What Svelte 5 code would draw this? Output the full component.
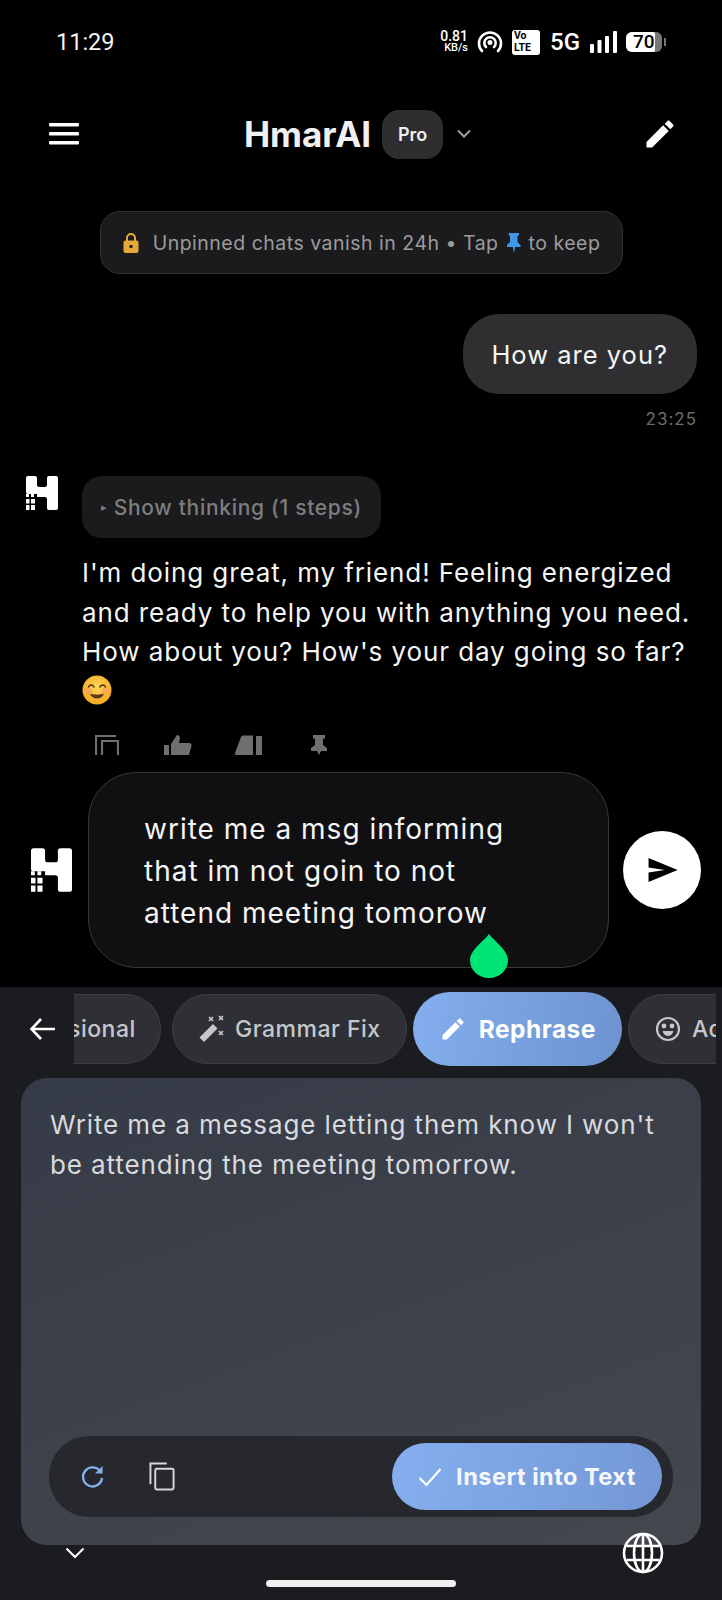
<script>
  const answer = [
    "I'm doing great, my friend! Feeling energized",
    "and ready to help you with anything you need.",
    "How about you? How's your day going so far?",
  ];
</script>

{#snippet logo(w, h)}
  <svg class="logo" width={w} height={h} viewBox="0 0 32 34">
    <path fill="#fff" d="M2 0h7a2 2 0 0 1 2 2v7a2 2 0 0 0 2 2h6a2 2 0 0 0 2-2V2a2 2 0 0 1 2-2h7a2 2 0 0 1 2 2v30a2 2 0 0 1-2 2h-7a2 2 0 0 1-2-2v-9a2 2 0 0 0-2-2H11v-3H2a2 2 0 0 1-2-2V2a2 2 0 0 1 2-2z" />
    <path fill="#fff" d="M0 18h3v3H0zM5 18h3v3H5zM0 23h3.500v4.500H0zM5 23h4v4.500H5zM0 29h3.500v5H0zM5 29h4v5H5z" />
  </svg>
{/snippet}

<div class="phone">
  <div class="upper">
    <div class="status">
      <span class="clock">11:29</span>
      <div class="status-right">
        <div class="speed"><span>0.81</span><span class="unit">KB/s</span></div>
        <svg width="26" height="26" viewBox="0 0 26 24" fill="none" stroke="#fff" stroke-width="2.600" stroke-linecap="round">
          <path d="M5 21a11 11 0 1 1 16 0" />
          <path d="M9 17a5.700 5.700 0 1 1 8 0" />
          <circle cx="13" cy="12.500" r="1.200" />
        </svg>
        <div class="volte"><span>Vo</span><span>LTE</span></div>
        <span class="net">5G</span>
        <svg width="27" height="22" viewBox="0 0 27 22" fill="#fff">
          <rect x="0" y="13" width="4" height="9" rx="1" />
          <rect x="7.500" y="9" width="4" height="13" rx="1" />
          <rect x="15" y="5" width="4" height="17" rx="1" />
          <rect x="23" y="0" width="4" height="22" rx="1" />
        </svg>
        <div class="battery"><div class="battery-fill">70</div></div>
      </div>
    </div>

    <header class="top">
      <svg class="menu" width="30" height="22" viewBox="0 0 30 22" fill="#fff">
        <rect y="0" width="30" height="3.500" rx="1" />
        <rect y="9" width="30" height="3.500" rx="1" />
        <rect y="18" width="30" height="3.500" rx="1" />
      </svg>
      <div class="brand">
        <span class="brand-name">HmarAI</span>
        <span class="pro">Pro</span>
        <svg width="16" height="10" viewBox="0 0 16 10" fill="none" stroke="#a0a0a0" stroke-width="2"><path d="M2 1.500l6 6 6-6" /></svg>
      </div>
      <svg class="pencil" width="36" height="36" viewBox="0 0 24 24" fill="#fff">
        <path d="M3 17.250V21h3.750L17.810 9.940l-3.750-3.750L3 17.250zM20.710 7.040c.39-.39.39-1.020 0-1.410l-2.340-2.340c-.39-.39-1.020-.39-1.410 0l-1.830 1.830 3.750 3.750 1.830-1.830z" />
      </svg>
    </header>

    <div class="notice-wrap">
      <div class="notice">
        <svg class="lock" width="18" height="22" viewBox="0 0 18 22">
          <path fill="none" stroke="#e5a93b" stroke-width="2" d="M5 9V6a4 4 0 0 1 8 0v3" />
          <rect x="1.500" y="8.500" width="15" height="12.500" rx="2" fill="#e5a93b" />
          <circle cx="9" cy="14.500" r="1.700" fill="#1b1b1d" />
        </svg>
        <span>Unpinned chats vanish in 24h • Tap</span>
        <svg width="16" height="22" viewBox="0 0 16 22" fill="#3f97e8"><path d="M3 1h10v2l-1.500 1v6l3 3v2H9.200L8 21l-1.200-6H1v-2l3-3V4L2.500 3z" /></svg>
        <span>to keep</span>
      </div>
    </div>

    <div class="chat">
      <div class="user-row">
        <div class="user-bubble">How are you?</div>
        <div class="stamp">23:25</div>
      </div>
      <div class="ai-row">
        {@render logo(32, 34)}
        <div class="ai-body">
          <div class="thinking"><span class="caret">▸</span> Show thinking (1 steps)</div>
          <div class="answer">
            {#each answer as line}
              <div>{line}</div>
            {/each}
            <svg class="emoji" width="30" height="30" viewBox="0 0 30 30">
              <defs>
                <radialGradient id="face" cx="50%" cy="40%" r="60%">
                  <stop offset="0%" stop-color="#fdd65a" />
                  <stop offset="100%" stop-color="#f3a81e" />
                </radialGradient>
              </defs>
              <circle cx="15" cy="15" r="14.500" fill="url(#face)" />
              <circle cx="6.500" cy="16" r="3.500" fill="#f79a6a" opacity="0.6" />
              <circle cx="23.500" cy="16" r="3.500" fill="#f79a6a" opacity="0.6" />
              <path d="M6.500 12c1-2.500 4.500-2.500 5.500 0M18 12c1-2.500 4.500-2.500 5.500 0" fill="none" stroke="#5b3a12" stroke-width="1.600" stroke-linecap="round" />
              <path d="M8 18.500c3 1.500 11 1.500 14 0-1 3.500-3.500 5-7 5s-6-1.500-7-5z" fill="#5b3a12" />
            </svg>
          </div>
          <div class="tools">
            <svg width="24" height="20" viewBox="0 0 24 20" fill="none" stroke="#6f6f6f" stroke-width="2.200"><path d="M1 20V1h20M7 20V6h16v14" /></svg>
            <svg width="28" height="20" viewBox="0 0 28 20" fill="#6f6f6f"><path d="M0 10h5v10H0zM7 9l6-9c2 0 3 1.500 3 3l-1 5h10c2 0 3 1.500 2.500 3L25 20H7z" /></svg>
            <svg class="flag" width="28" height="20" viewBox="0 0 28 20" fill="#6f6f6f"><path d="M6 2c.4-1 1.200-1.500 2-1.500h10V20H1c-1 0-1.300-.8-1-2zM21 1h6v19h-6z" /></svg>
            <svg width="18" height="20" viewBox="0 0 18 20" fill="#6f6f6f"><path d="M3 0h12v3l-2 1v6l4 3v3h-6l-2 4-2-4H1v-3l4-3V4L3 3z" /></svg>
          </div>
        </div>
      </div>
    </div>

    <div class="composer">
      {@render logo(41, 46)}
      <div class="input">
        <div>write me a msg informing</div>
        <div>that im not goin to not</div>
        <div>attend meeting tomorow</div>
        <svg class="drop" width="38" height="44" viewBox="0 0 38 44">
          <path fill="#00e676" d="M19 0C24 7 38 16 38 26c0 10-8 18-19 18S0 36 0 26C0 16 14 7 19 0z" />
        </svg>
      </div>
      <div class="send">
        <svg width="34" height="34" viewBox="0 0 24 24" fill="#000"><path d="M2.500 3.500L23 12 2.500 20.500v-6.700L14 12 2.500 10.200z" /></svg>
      </div>
    </div>
  </div>

  <div class="keyboard">
    <div class="modes">
      <svg class="back" width="26" height="24" viewBox="0 0 26 24" fill="none" stroke="#fff" stroke-width="2.600"><path d="M12 2L2.500 12l9.500 10M3 12h23" /></svg>
      <div class="chip-track">
        <div class="chip cut-left"><span>sional</span></div>
        <div class="chip grammar">
          <svg width="30" height="30" viewBox="0 0 30 30">
            <path fill="#c6c7cb" d="M17 10l4.500 4.500L8 28l-4.500-4.500z" />
            <path stroke="#c6c7cb" stroke-width="1.700" d="M13 3l4 4M17 3l-4 4M23 2l4 4M27 2l-4 4M23 17l4 4M27 17l-4 4" />
          </svg>
          Grammar Fix
        </div>
        <div class="chip active">
          <svg width="28" height="28" viewBox="0 0 24 24" fill="#fff"><path d="M3 17.250V21h3.750L17.810 9.940l-3.750-3.750L3 17.250zM20.710 7.040c.39-.39.39-1.020 0-1.410l-2.340-2.340c-.39-.39-1.020-.39-1.410 0l-1.830 1.830 3.750 3.750 1.830-1.830z" /></svg>
          Rephrase
        </div>
        <div class="chip cut-right">
          <svg width="28" height="28" viewBox="0 0 28 28" fill="none" stroke="#c6c7cb" stroke-width="2.200">
            <circle cx="14" cy="14" r="11" />
            <circle cx="10" cy="11" r="1.300" fill="#c6c7cb" />
            <circle cx="18" cy="11" r="1.300" fill="#c6c7cb" />
            <path d="M8.500 16h11c-1 3.500-3 5-5.500 5s-4.500-1.500-5.500-5z" fill="#c6c7cb" stroke="none" />
          </svg>
          Adjust
        </div>
      </div>
    </div>

    <div class="panel">
      <p class="result">Write me a message letting them know I won't be attending the meeting tomorrow.</p>
      <div class="actions">
        <svg class="refresh" width="28" height="28" viewBox="0 0 28 28" fill="none" stroke="#86b0ee" stroke-width="2.400">
          <path d="M21 8a9.500 9.500 0 1 0 2 7" />
          <path d="M23.500 3v7.500H16z" fill="#86b0ee" stroke="none" />
        </svg>
        <svg class="copy" width="27" height="31" viewBox="0 0 28 30" fill="none" stroke="#d8d8da" stroke-width="2">
          <path d="M1.500 23V1.500h17" />
          <rect x="6.500" y="7" width="19" height="21.500" rx="1.500" />
        </svg>
        <div class="insert">
          <svg width="24" height="20" viewBox="0 0 24 20" fill="none" stroke="#fff" stroke-width="2.200"><path d="M1.500 11l7 7L22.500 2" /></svg>
          Insert into Text
        </div>
      </div>
    </div>

    <div class="kb-bottom">
      <svg width="20" height="12" viewBox="0 0 20 12" fill="none" stroke="#fff" stroke-width="2"><path d="M1.500 1.500L10 10l8.500-8.500" /></svg>
      <svg class="globe" width="42" height="42" viewBox="0 0 42 42" fill="none" stroke="#fff" stroke-width="2.600">
        <circle cx="21" cy="21" r="19" />
        <ellipse cx="21" cy="21" rx="9" ry="19" />
        <path d="M21 2v38M4.500 14h33M4.500 28h33" />
      </svg>
    </div>
    <div class="home-bar"></div>
  </div>
</div>

<style>
  :global(body) {
    background: #000;
  }

  .phone {
    width: 722px;
    height: 1600px;
    display: flex;
    flex-direction: column;
    overflow: hidden;
    background: #000;
    color: #fff;
    font-family: Inter, "Liberation Sans", sans-serif;
  }

  .upper {
    height: 987px;
    flex: none;
    display: flex;
    flex-direction: column;
    overflow: hidden;
  }

  .status {
    height: 84px;
    padding: 0 56px;
    display: flex;
    justify-content: space-between;
    align-items: center;
    flex: none;
  }

  .clock {
    font: 400 23.500px Roboto, sans-serif;
    color: #f2f2f2;
  }

  .status-right {
    display: flex;
    align-items: center;
    gap: 9px;
    margin-right: 4px;
  }

  .speed {
    display: flex;
    flex-direction: column;
    align-items: flex-end;
    font: 500 14px/12px Roboto, sans-serif;
  }

  .speed .unit {
    font-size: 11px;
  }

  .volte {
    width: 28px;
    height: 25px;
    border-radius: 3px;
    background: #fff;
    color: #000;
    display: flex;
    flex-direction: column;
    padding-left: 2px;
    box-sizing: border-box;
    font: 700 10.500px/12px Roboto, sans-serif;
  }

  .net {
    font: 500 24px Roboto, sans-serif;
    margin: 0 1px;
  }

  .battery {
    width: 36px;
    height: 20px;
    border-radius: 6px;
    background: #777;
    position: relative;
  }

  .battery::after {
    content: "";
    position: absolute;
    right: -4px;
    top: 6px;
    width: 2px;
    height: 8px;
    background: #777;
  }

  .battery-fill {
    width: 29px;
    height: 20px;
    padding-left: 7px;
    box-sizing: border-box;
    background: #fff;
    color: #000;
    border-radius: 6px 2px 2px 6px;
    font: 500 19px/20px Roboto, sans-serif;
  }

  .top {
    height: 100px;
    flex: none;
    padding: 0 44px 0 49px;
    display: flex;
    align-items: center;
    justify-content: space-between;
  }

  .brand {
    display: flex;
    align-items: center;
    margin-left: -5px;
  }

  .brand-name {
    font-size: 35px;
    font-weight: 700;
    color: #f0f0f0;
  }

  .pro {
    width: 61px;
    height: 49px;
    margin: 0 13px 0 11px;
    background: #2e2e30;
    border-radius: 17px;
    display: flex;
    align-items: center;
    justify-content: center;
    font-size: 18px;
    font-weight: 600;
    color: #f0f0f0;
  }

  .notice-wrap {
    display: flex;
    justify-content: center;
    margin-top: 27px;
    flex: none;
  }

  .notice {
    width: 523px;
    height: 63px;
    box-sizing: border-box;
    border: 1.500px solid #333335;
    border-radius: 20px;
    background: #1b1b1d;
    display: flex;
    align-items: center;
    justify-content: center;
    gap: 7px;
    font-size: 19.500px;
    letter-spacing: 0.5px;
    color: #9b9b9d;
  }

  .lock {
    margin-right: 6px;
  }

  .chat {
    height: 481px;
    flex: none;
    overflow: hidden;
    padding: 40px 25px 0 26px;
    box-sizing: border-box;
  }

  .user-row {
    display: flex;
    flex-direction: column;
    align-items: flex-end;
  }

  .user-bubble {
    height: 80px;
    padding: 0 29px 0 28px;
    display: flex;
    align-items: center;
    background: #2f2f31;
    border-radius: 36px;
    font-size: 25.500px;
    letter-spacing: 1px;
    color: #f5f5f5;
  }

  .stamp {
    margin-top: 15px;
    font-size: 17px;
    letter-spacing: 1px;
    color: #6c6c6e;
  }

  .ai-row {
    display: flex;
    align-items: flex-start;
    gap: 24px;
    margin-top: 47px;
  }

  .logo {
    flex: none;
  }

  .ai-body {
    min-width: 0;
  }

  .thinking {
    width: 299px;
    height: 62px;
    border-radius: 20px;
    background: #1b1b1d;
    display: flex;
    align-items: center;
    justify-content: center;
    gap: 6px;
    font-size: 21px;
    font-weight: 500;
    letter-spacing: 0.7px;
    color: #7e7e80;
  }

  .caret {
    font-size: 11px;
  }

  .answer {
    margin-top: 15px;
    font-size: 26px;
    line-height: 39.500px;
    letter-spacing: 0.9px;
    white-space: nowrap;
    color: #f5f5f5;
  }

  .emoji {
    display: block;
    margin-top: 3px;
  }

  .tools {
    display: flex;
    align-items: flex-end;
    gap: 45px;
    margin: 30px 0 0 13px;
  }

  .flag {
    margin: 0 2px 0 -2px;
  }

  .composer {
    flex: none;
    display: flex;
    align-items: center;
    padding: 17px 0 0 31px;
    height: 196px;
  }

  .input {
    position: relative;
    width: 521px;
    height: 196px;
    margin-left: 16px;
    box-sizing: border-box;
    border: 1.500px solid #38383a;
    border-radius: 48px;
    background: #101012;
    padding: 35px 0 0 55px;
    font-size: 28px;
    line-height: 42px;
    letter-spacing: 1px;
    color: #f5f5f5;
  }

  .drop {
    position: absolute;
    left: 381px;
    top: 161px;
  }

  .send {
    width: 78px;
    height: 78px;
    margin-left: 14px;
    border-radius: 50%;
    background: #fff;
    display: flex;
    align-items: center;
    justify-content: center;
  }

  .keyboard {
    flex: 1;
    position: relative;
    display: flex;
    flex-direction: column;
    background: #1b1c20;
  }

  .modes {
    height: 83px;
    margin-bottom: 8px;
    flex: none;
    display: flex;
    align-items: center;
    padding-left: 29px;
  }

  .back {
    flex: none;
    margin-right: 19px;
  }

  .chip-track {
    flex: 1;
    min-width: 0;
    margin-right: 6px;
    display: flex;
    align-items: center;
    gap: 11px;
    overflow: hidden;
  }

  .chip {
    height: 70px;
    flex: none;
    box-sizing: border-box;
    border: 1.500px solid #3d3e43;
    border-radius: 35px;
    background: #2e3035;
    padding: 0 25px;
    display: flex;
    align-items: center;
    gap: 10px;
    font-size: 23px;
    font-weight: 500;
    letter-spacing: 0.5px;
    color: #c6c7cb;
  }

  .chip.grammar {
    padding: 0 25px 0 23px;
    gap: 9px;
  }

  .chip.cut-left {
    width: 87px;
    padding: 0;
    border-left: none;
    border-radius: 0 35px 35px 0;
    overflow: hidden;
  }

  .chip.cut-left span {
    margin-left: -6px;
  }

  .chip.active {
    height: 74px;
    border: none;
    border-radius: 37px;
    margin: 0 -5px;
    padding: 0 26px;
    gap: 12px;
    background: linear-gradient(100deg, #84aeee, #6d93cf);
    color: #fff;
    font-weight: 700;
    font-size: 24.500px;
  }

  .panel {
    flex: none;
    height: 467px;
    margin: 0 21px;
    padding: 0 28px 28px;
    box-sizing: border-box;
    border-radius: 26px;
    background: linear-gradient(160deg, #353b47, #45474e);
    display: flex;
    flex-direction: column;
    justify-content: space-between;
  }

  .result {
    margin: 27px 0 0 1px;
    font-size: 26px;
    line-height: 40px;
    letter-spacing: 0.9px;
    color: #d8dade;
  }

  .actions {
    height: 81px;
    display: flex;
    align-items: center;
    border-radius: 40px;
    background: #26282d;
    padding: 0 11px 0 30px;
  }

  .copy {
    margin-left: 42px;
  }

  .insert {
    margin-left: auto;
    width: 270px;
    height: 67px;
    border-radius: 34px;
    background: linear-gradient(100deg, #85afef, #7397d4);
    display: flex;
    align-items: center;
    justify-content: center;
    gap: 14px;
    font-size: 23.500px;
    font-weight: 700;
    letter-spacing: 0.5px;
    color: #f5f7fb;
  }

  .kb-bottom {
    display: flex;
    justify-content: space-between;
    align-items: flex-start;
    padding: 0 58px 0 65px;
  }

  .kb-bottom > svg:first-child {
    margin-top: 2px;
  }

  .globe {
    margin-top: -13px;
  }

  .home-bar {
    position: absolute;
    left: 266px;
    bottom: 13px;
    width: 190px;
    height: 7px;
    border-radius: 4px;
    background: #efefef;
  }
</style>
